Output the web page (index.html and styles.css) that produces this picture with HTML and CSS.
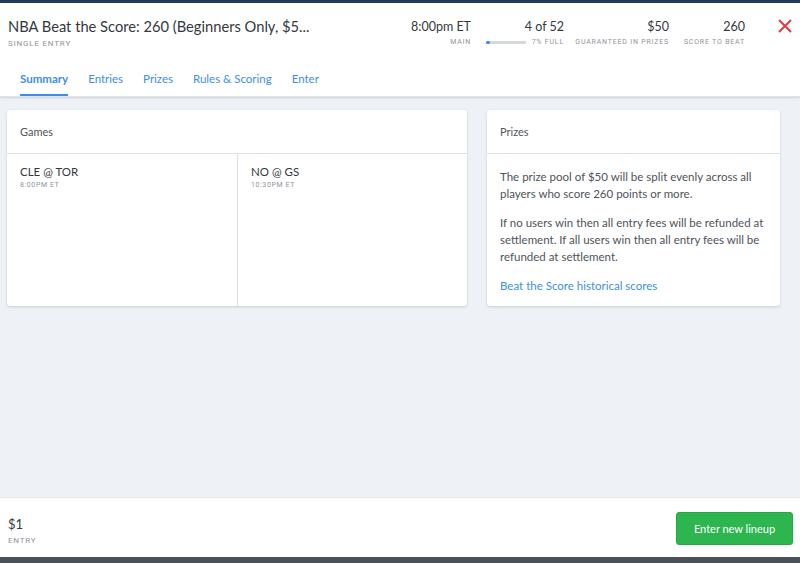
FILE: index.html
```html
<!DOCTYPE html>
<html>
<head>
<meta charset="UTF-8">
<link rel="stylesheet" href="styles.css">
</head>
<body>
<div class="page">
  <header class="top">
    <div class="top-row">
      <div class="title-block">
        <h1 class="title">NBA Beat the Score: 260 (Beginners Only, $5...</h1>
        <div class="label">Single Entry</div>
      </div>
      <div class="stats">
        <div class="stat stat-time">
          <div class="stat-value">8:00pm ET</div>
          <div class="label">Main</div>
        </div>
        <div class="stat stat-entries">
          <div class="stat-value">4 of 52</div>
          <div class="fill-row">
            <div class="fill-bar"><div class="fill-bar-in" style="width:7%"></div></div>
            <div class="label">7% Full</div>
          </div>
        </div>
        <div class="stat stat-prizes">
          <div class="stat-value">$50</div>
          <div class="label">Guaranteed in prizes</div>
        </div>
        <div class="stat stat-score">
          <div class="stat-value">260</div>
          <div class="label">Score to beat</div>
        </div>
      </div>
      <div class="close">
        <svg width="14" height="14" viewBox="0 0 14 14"><path d="M1 1L13 13M13 1L1 13" stroke="#e2393f" stroke-width="2" fill="none"/></svg>
      </div>
    </div>
    <nav class="tabs">
      <a class="tab active">Summary</a>
      <a class="tab">Entries</a>
      <a class="tab">Prizes</a>
      <a class="tab">Rules &amp; Scoring</a>
      <a class="tab">Enter</a>
    </nav>
  </header>

  <main class="content">
    <section class="card games">
      <div class="card-head">Games</div>
      <div class="game-list">
        <div class="game">
          <div class="game-name">CLE @ TOR</div>
          <div class="game-time">8:00PM ET</div>
        </div>
        <div class="game">
          <div class="game-name">NO @ GS</div>
          <div class="game-time">10:30PM ET</div>
        </div>
      </div>
    </section>
    <section class="card prizes">
      <div class="card-head">Prizes</div>
      <div class="card-body">
        <p>The prize pool of $50 will be split evenly across all players who score 260 points or more.</p>
        <p>If no users win then all entry fees will be refunded at settlement. If all users win then all entry fees will be refunded at settlement.</p>
        <a class="link">Beat the Score historical scores</a>
      </div>
    </section>
  </main>

  <footer class="bottom">
    <div class="entry">
      <div class="entry-fee">$1</div>
      <div class="label">Entry</div>
    </div>
    <button class="enter-btn">Enter new lineup</button>
  </footer>
  <div class="under"></div>
</div>
</body>
</html>
```

FILE: styles.css
```css
/* colours */

:root {
    --blue: #3d8ee8;
    --text: #3a3f47;
    --muted: #8f949b;
    --line: #dde1e6;
    --page-bg: #eef1f5;
}

* {
    margin: 0;
    padding: 0;
    box-sizing: border-box;
}

html, body {
    height: 100%;
}

body {
    font-family: Lato, "Open Sans", sans-serif;
    color: var(--text);
    background: var(--page-bg);
}

.page {
    height: 100%;
    display: flex;
    flex-direction: column;
}

.label {
    font-family: Roboto, "DejaVu Sans", sans-serif;
    font-size: 7px;
    letter-spacing: 0.8px;
    text-transform: uppercase;
    color: var(--muted);
}

/* header */

.top {
    background: #fff;
    border-top: 3px solid #213a57;
    box-shadow: 0 1px 2px rgba(0, 0, 0, 0.12);
    border-bottom: 1px solid #dfe3e8;
}

.top-row {
    display: flex;
    align-items: flex-start;
    padding: 14px 8px 0 8px;
    height: 64px;
}

.title-block {
    flex: 1;
}

.title {
    font-size: 14.7px;
    font-weight: 400;
    color: #333840;
    line-height: 18px;
}

.title-block .label {
    margin-top: 4px;
    font-size: 8px;
}

.stats {
    display: flex;
    text-align: right;
    margin-top: 2px;
}

.stat-value {
    font-size: 12.5px;
    line-height: 16px;
    color: #333840;
}

.stat .label {
    margin-top: 3px;
}

.stat-time {
    width: 70px;
}

.stat-entries {
    width: 93px;
}

.fill-row {
    display: flex;
    align-items: center;
    justify-content: flex-end;
    gap: 6px;
}

.fill-bar {
    width: 40px;
    height: 3px;
    background: #d3d8de;
    border-radius: 2px;
    margin-top: 3px;
}

.fill-bar-in {
    height: 100%;
    min-width: 4px;
    background: var(--blue);
    border-radius: 2px;
}

.stat-prizes {
    width: 105px;
}

.stat-score {
    width: 76px;
}

.close {
    margin-left: 33px;
    margin-top: 0;
    width: 14px;
}

.tabs {
    display: flex;
    gap: 20px;
    padding: 0 20px;
}

.tab {
    font-size: 11.5px;
    line-height: 14px;
    color: var(--blue);
    padding: 5px 0 8px 0;
    border-bottom: 2px solid transparent;
    cursor: pointer;
}

.tab.active {
    font-weight: 700;
    border-bottom-color: var(--blue);
}

/* cards */

.content {
    flex: 1;
    display: flex;
    align-items: flex-start;
    gap: 20px;
    padding: 13px 20px 0 7px;
}

.card {
    background: #fff;
    border-radius: 3px;
    box-shadow: 0 1px 3px rgba(0, 0, 0, 0.15);
    height: 196px;
    display: flex;
    flex-direction: column;
}

.games {
    width: 460px;
}

.prizes {
    flex: 1;
}

.card-head {
    font-size: 11px;
    color: #50555c;
    height: 44px;
    padding: 15px 13px 0 13px;
    border-bottom: 1px solid var(--line);
}

.game-list {
    flex: 1;
    display: grid;
    grid-template-columns: 230px 1fr;
}

.game {
    padding: 11px 13px;
}

.game + .game {
    border-left: 1px solid var(--line);
}

.game-name {
    font-size: 11.5px;
    color: #333840;
}

.game-time {
    font-family: Roboto, "DejaVu Sans", sans-serif;
    font-size: 7px;
    letter-spacing: 0.6px;
    color: var(--muted);
    margin-top: 3px;
}

.card-body {
    padding: 14px 13px 0 13px;
    font-size: 11.5px;
    line-height: 17px;
    color: #4e535a;
}

.card-body p {
    margin-bottom: 12px;
}

.link {
    color: var(--blue);
    display: block;
    margin-top: 1px;
    cursor: pointer;
}

/* footer */

.bottom {
    background: #fff;
    height: 60px;
    display: flex;
    align-items: center;
    justify-content: space-between;
    padding: 0 7px 0 8px;
    border-top: 1px solid #e4e7eb;
}

.entry {
    padding-top: 5px;
}

.entry-fee {
    font-size: 13px;
    color: #333840;
}

.entry .label {
    margin-top: 4px;
    font-size: 8px;
}

.enter-btn {
    font-family: Lato, "Open Sans", sans-serif;
    font-size: 11px;
    color: #fff;
    background: #2db54f;
    border: 1px solid #28a646;
    border-radius: 3px;
    width: 117px;
    height: 33px;
    margin-top: 2px;
}

.under {
    height: 6px;
    background: #4b5158;
}
```
